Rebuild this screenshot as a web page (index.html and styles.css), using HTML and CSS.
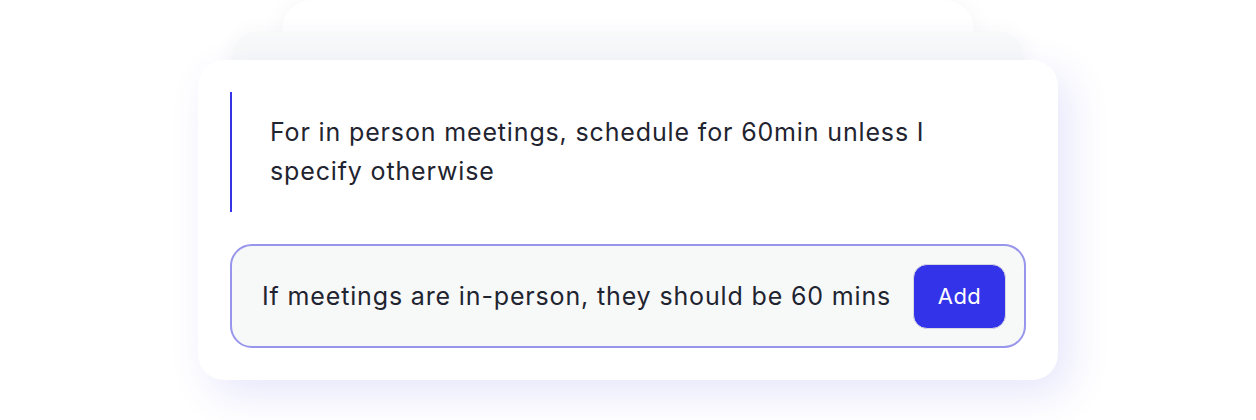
FILE: index.html
```html
<!DOCTYPE html>
<html lang="en">
<head>
<meta charset="utf-8">
<link rel="stylesheet" href="styles.css">
</head>
<body>
<div class="stage">
  <div class="stack">
    <div class="card">
      <div class="quote">
        <p class="quote-text">For in person meetings, schedule for 60min unless I specify otherwise</p>
      </div>
      <div class="input-row">
        <span class="input-text">If meetings are in-person, they should be 60 mins</span>
        <button class="add-btn">Add</button>
      </div>
    </div>
  </div>
</div>
</body>
</html>
```
FILE: styles.css
```css
html, body {
  margin: 0;
  padding: 0;
  background: #ffffff;
}
body {
  width: 1256px;
  height: 420px;
  overflow: hidden;
  font-family: Inter, "Noto Sans", sans-serif;
}
.stage {
  display: flex;
  justify-content: center;
  padding-top: 60px;
}
.stack {
  position: relative;
  width: 860px;
}
.stack::before {
  content: "";
  position: absolute;
  left: 84px;
  right: 84px;
  top: -60px;
  height: 120px;
  background: #ffffff;
  border-radius: 30px;
  box-shadow: 0 0 24px rgba(60, 60, 120, 0.04);
}
.stack::after {
  content: "";
  position: absolute;
  left: 34px;
  right: 34px;
  top: -28px;
  height: 120px;
  background: #f8f9f9;
  border-radius: 26px;
  box-shadow: 0 0 20px rgba(60, 60, 140, 0.05);
}
.card {
  position: relative;
  z-index: 1;
  box-sizing: border-box;
  height: 320px;
  background: #ffffff;
  border-radius: 26px;
  padding: 32px;
  display: flex;
  flex-direction: column;
  gap: 32px;
  box-shadow: 12px 14px 40px rgba(88, 80, 230, 0.14);
}
.quote {
  height: 120px;
  border-left: 2px solid #3535e6;
  display: flex;
  align-items: center;
  padding-left: 38px;
}
.quote-text {
  margin: 0;
  font-size: 25px;
  line-height: 39px;
  letter-spacing: 0.85px;
  color: #1f2430;
  max-width: 700px;
}
.input-row {
  box-sizing: border-box;
  height: 104px;
  border: 2px solid #9896ec;
  border-radius: 22px;
  background: #f7f8f8;
  display: flex;
  align-items: center;
  justify-content: space-between;
  padding: 0 18px 0 30px;
}
.input-text {
  font-size: 25px;
  letter-spacing: 0.85px;
  color: #1f2430;
}
.add-btn {
  width: 93px;
  height: 65px;
  border: 1px solid #d8d8e0;
  border-radius: 14px;
  background: #3333ea;
  color: #ffffff;
  font-family: Inter, "Noto Sans", sans-serif;
  font-size: 22px;
  letter-spacing: 0.4px;
  cursor: pointer;
}
```
